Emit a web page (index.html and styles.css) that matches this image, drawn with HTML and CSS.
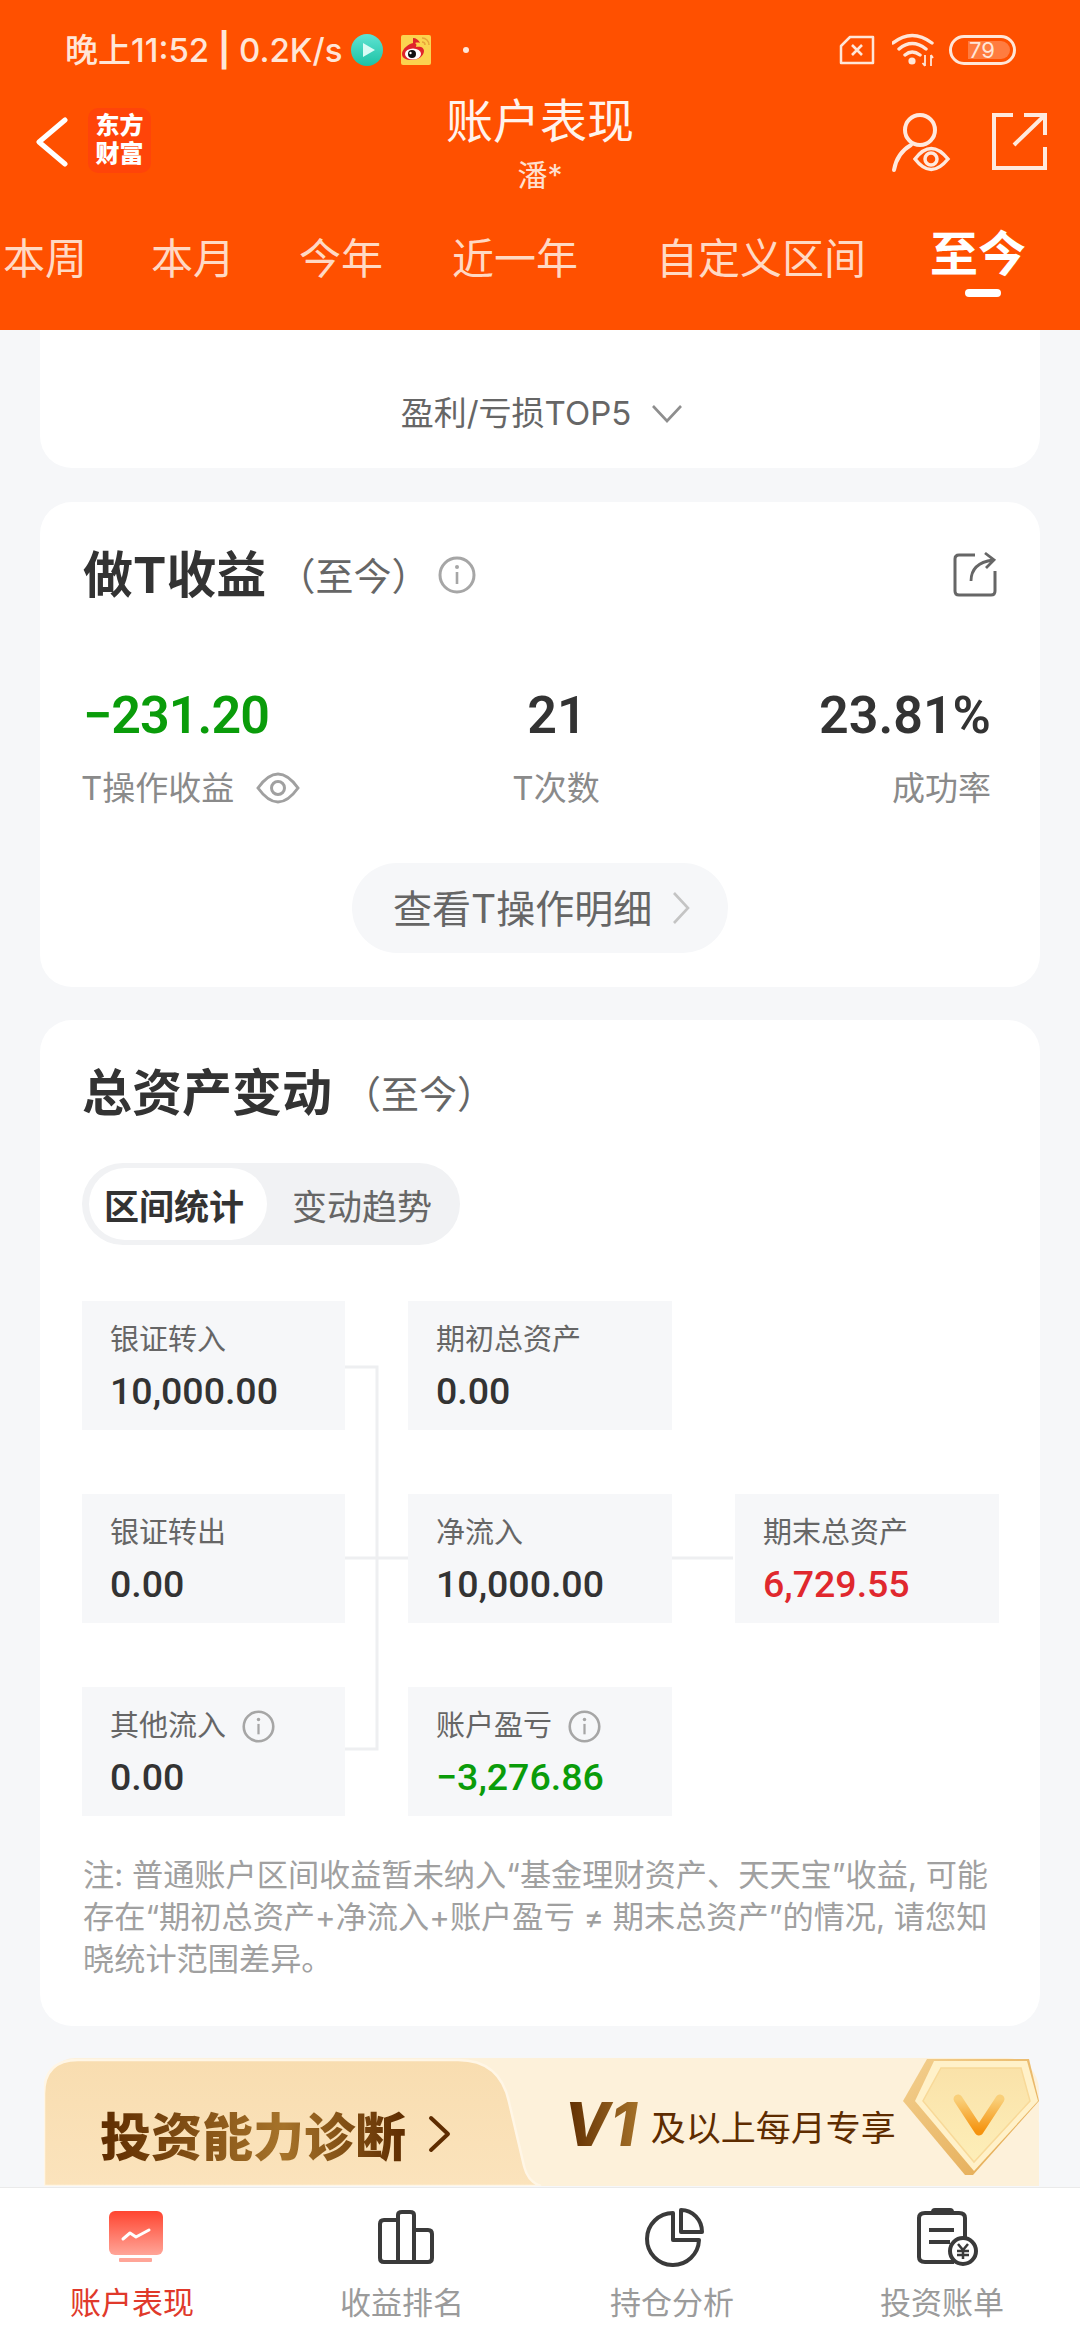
FILE: index.html
```html
<!DOCTYPE html>
<html lang="zh-CN">
<head>
<meta charset="utf-8">
<title>账户表现</title>
<link rel="stylesheet" href="styles.css">
</head>
<body>
<div class="app">
  <header class="header">
    <div class="status">
      <span class="status-text">晚上11:52 <b class="pipe">|</b> 0.2K/s</span>
      <svg class="st-play" viewBox="0 0 32 34"><defs><linearGradient id="pl" x1="0" y1="0" x2="0" y2="1"><stop offset="0" stop-color="#5fe3d3"/><stop offset="1" stop-color="#1cc2a4"/></linearGradient></defs><circle cx="16" cy="17" r="16" fill="url(#pl)"/><path d="M12 10 L24 17 L12 24Z" fill="#d8fbf5"/></svg>
      <svg class="st-weibo" viewBox="0 0 30 30"><rect width="30" height="30" rx="2" fill="#fbd34f"/><path d="M21 3a7 7 0 0 1 7 7M21 7a3 3 0 0 1 3 3" stroke="#e8a33a" stroke-width="1.5" fill="none"/><path d="M1 19c0-5 7-11 12-11 2 0 3 1 2 4 4-1 8 0 8 4 0 5-6 9-12 9S1 23 1 19z" fill="#e0242b"/><path d="M12 3c3 0 6 2 7 5-3-1-5 0-7 1z" fill="#e0242b"/><ellipse cx="12" cy="19" rx="8" ry="5.5" fill="#fff"/><circle cx="11" cy="19" r="4" fill="#111"/><circle cx="9.5" cy="18" r="1.2" fill="#fff"/></svg>
      <span class="st-dot"></span>
      <div class="status-right">
        <svg class="st-sim" viewBox="0 0 36 30"><path d="M11 2H34V28H2V11Z" fill="none" stroke="#ffe6d8" stroke-width="2.5" stroke-linejoin="round"/><path d="M13 10L23 20M23 10L13 20" stroke="#ffe6d8" stroke-width="2.6"/></svg>
        <svg class="st-wifi" viewBox="0 0 42 34"><path d="M1 10Q20-5 40 10M7 16Q20 5 34 16M13 22Q20 16 28 22" fill="none" stroke="#ffe6d8" stroke-width="3.4" stroke-linecap="round"/><circle cx="20" cy="28" r="3.6" fill="#ffe6d8"/><path d="M33 22V33M33 33l-2.500-3M39 33V22M39 22l2 3" stroke="#ffe6d8" stroke-width="1.800" fill="none"/></svg>
        <div class="st-batt"><span class="st-batt-fill">79</span></div>
      </div>
    </div>
    <div class="titlebar">
      <svg class="back" viewBox="0 0 32 50"><path d="M29 3L3 25L29 47" fill="none" stroke="#fff" stroke-width="5" stroke-linecap="round" stroke-linejoin="round"/></svg>
      <div class="logo">东方<br>财富</div>
      <div class="title-box">
        <div class="title">账户表现</div>
        <div class="subtitle">潘*</div>
      </div>
      <div class="title-actions">
        <svg class="act-person" viewBox="0 0 60 64"><circle cx="29" cy="20" r="15" fill="none" stroke="#ffe9dd" stroke-width="4"/><path d="M3 60Q6 43 20 35" fill="none" stroke="#ffe9dd" stroke-width="4" stroke-linecap="round"/><path d="M24 49Q40 28 57 49Q40 70 24 49Z" fill="none" stroke="#ffe9dd" stroke-width="3.500"/><circle cx="40" cy="49" r="6" fill="none" stroke="#ffe9dd" stroke-width="3.500"/></svg>
        <svg class="act-share" viewBox="0 0 58 60"><path d="M22 3H3V56H54V35" fill="none" stroke="#ffe9dd" stroke-width="4"/><path d="M23 33L53 4M33 3H54V23" fill="none" stroke="#ffe9dd" stroke-width="4"/></svg>
      </div>
    </div>
    <nav class="tabs">
      <span class="tab tab-a">本周</span>
      <span class="tab tab-b">本月</span>
      <span class="tab tab-c">今年</span>
      <span class="tab tab-d">近一年</span>
      <span class="tab tab-e">自定义区间</span>
      <span class="tab tab-on">至今</span>
    </nav>
  </header>

  <main class="main">
    <section class="card card-top">
      <span class="more">盈利/亏损TOP5</span>
      <svg class="more-chev" viewBox="0 0 32 20"><path d="M2 3L16 18L30 3" fill="none" stroke="#8e8e8e" stroke-width="2.600"/></svg>
    </section>

    <section class="card card-t">
      <div class="card-head">
        <h2 class="card-title">做T收益</h2>
        <span class="card-range">（至今）</span>
        <svg class="ic-info ic-info-lg" viewBox="0 0 38 38"><circle cx="19" cy="19" r="17" fill="none" stroke="#a6a6a6" stroke-width="3"/><circle cx="19" cy="11" r="2" fill="#a6a6a6"/><path d="M19 16V28" stroke="#a6a6a6" stroke-width="2.600"/></svg>
        <svg class="ic-share" viewBox="0 0 44 46"><path d="M22 4H6Q2 4 2 8V40Q2 44 6 44H38Q42 44 42 40V20" fill="none" stroke="#666" stroke-width="3"/><path d="M18 30Q18 12 40 9M32 2L41 9L33 17" fill="none" stroke="#666" stroke-width="2.800"/></svg>
      </div>
      <div class="stats">
        <div class="stat">
          <div class="stat-val green">−231.20</div>
          <div class="stat-lab">T操作收益<svg class="ic-eye" viewBox="0 0 44 32"><path d="M2 16Q22-12 42 16Q22 44 2 16Z" fill="none" stroke="#a0a0a0" stroke-width="3"/><circle cx="22" cy="16" r="6.500" fill="none" stroke="#a0a0a0" stroke-width="3"/></svg></div>
        </div>
        <div class="stat stat-mid">
          <div class="stat-val">21</div>
          <div class="stat-lab">T次数</div>
        </div>
        <div class="stat stat-end">
          <div class="stat-val">23.81%</div>
          <div class="stat-lab">成功率</div>
        </div>
      </div>
      <div class="btn-row">
        <div class="btn">查看T操作明细<svg class="btn-chev" viewBox="0 0 20 34"><path d="M3 2L17 17L3 32" fill="none" stroke="#c4c4c4" stroke-width="2.600"/></svg></div>
      </div>
    </section>

    <section class="card card-assets">
      <div class="card-head card-head-2">
        <h2 class="card-title">总资产变动</h2>
        <span class="card-range">（至今）</span>
      </div>
      <div class="seg">
        <span class="seg-item seg-on">区间统计</span>
        <span class="seg-item">变动趋势</span>
      </div>
      <div class="flow">
        <svg class="flow-lines" viewBox="0 0 915 515"><path d="M263 66H295V448H263M263 257H326M590 257H651" fill="none" stroke="#eeeff1" stroke-width="3"/></svg>
        <div class="box"><div class="box-lab">银证转入</div><div class="box-val">10,000.00</div></div>
        <div class="box"><div class="box-lab">期初总资产</div><div class="box-val">0.00</div></div>
        <div class="box box-empty"></div>
        <div class="box"><div class="box-lab">银证转出</div><div class="box-val">0.00</div></div>
        <div class="box"><div class="box-lab">净流入</div><div class="box-val">10,000.00</div></div>
        <div class="box"><div class="box-lab">期末总资产</div><div class="box-val box-red">6,729.55</div></div>
        <div class="box"><div class="box-lab">其他流入<svg class="ic-info ic-info-sm" viewBox="0 0 38 38"><circle cx="19" cy="19" r="17" fill="none" stroke="#a6a6a6" stroke-width="3"/><circle cx="19" cy="11" r="2" fill="#a6a6a6"/><path d="M19 16V28" stroke="#a6a6a6" stroke-width="2.600"/></svg></div><div class="box-val">0.00</div></div>
        <div class="box"><div class="box-lab">账户盈亏<svg class="ic-info ic-info-sm" viewBox="0 0 38 38"><circle cx="19" cy="19" r="17" fill="none" stroke="#a6a6a6" stroke-width="3"/><circle cx="19" cy="11" r="2" fill="#a6a6a6"/><path d="M19 16V28" stroke="#a6a6a6" stroke-width="2.600"/></svg></div><div class="box-val box-green">−3,276.86</div></div>
      </div>
      <p class="note">注: 普通账户区间收益暂未纳入“基金理财资产、天天宝”收益, 可能<br>存在“期初总资产+净流入+账户盈亏 ≠ 期末总资产”的情况, 请您知<br>晓统计范围差异。</p>
    </section>

    <section class="banner">
      <svg class="banner-tab" viewBox="0 0 500 128"><defs><linearGradient id="bt" x1="0" y1="0" x2="0" y2="1"><stop offset="0" stop-color="#f8ddb0"/><stop offset="1" stop-color="#fbe3bc"/></linearGradient></defs><path d="M0 128V36Q0 2 34 2H414Q456 2 465 44L480 108Q484 124 497 128Z" fill="url(#bt)" stroke="#fff6e6" stroke-width="2.500"/></svg>
      <div class="banner-left">
        <span class="banner-title">投资能力诊断</span>
        <svg class="banner-chev" viewBox="0 0 24 38"><path d="M3 3L20 19L3 35" fill="none" stroke="#5e2c00" stroke-width="4" stroke-linecap="round" stroke-linejoin="round"/></svg>
      </div>
      <div class="banner-right">
        <span class="banner-v">V1</span>
        <span class="banner-sub">及以上每月专享</span>
      </div>
      <svg class="badge" viewBox="0 0 136 116"><defs><linearGradient id="g1" x1="0" y1="0" x2="1" y2="1"><stop offset="0" stop-color="#f3cf8e"/><stop offset="1" stop-color="#e3a84f"/></linearGradient><linearGradient id="g2" x1="0" y1="0" x2="0" y2="1"><stop offset="0" stop-color="#fae2a9"/><stop offset="1" stop-color="#fdeeb8"/></linearGradient><linearGradient id="g3" x1="0" y1="0" x2="0" y2="1"><stop offset="0" stop-color="#f9cf79"/><stop offset="1" stop-color="#f5930f"/></linearGradient></defs><path d="M24 0H126L136 42L70 116H62L0 42Z" fill="url(#g1)"/><path d="M31 2H124L135 42L71 112L12 42Z" fill="#fff1c9"/><path d="M38 9H118L127 42L71 103L20 42Z" fill="url(#g2)" stroke="#f8d998" stroke-width="1.500"/><path d="M55 40L76 72L97 40" fill="none" stroke="url(#g3)" stroke-width="9" stroke-linecap="round" stroke-linejoin="round"/></svg>
    </section>
  </main>

  <footer class="nav">
    <div class="nav-item nav-on">
      <svg class="nav-ic" viewBox="0 0 64 60"><defs><linearGradient id="mon" x1="0" y1="0" x2="0" y2="1"><stop offset="0" stop-color="#ff4530"/><stop offset="1" stop-color="#ffa598"/></linearGradient></defs><rect x="9" y="3" width="54" height="44" rx="6" fill="url(#mon)"/><rect x="19" y="50" width="33" height="4" rx="1" fill="#ffa598"/><path d="M23 31L30 25L36 29L49 22" fill="none" stroke="#fff" stroke-width="3" stroke-linecap="round" stroke-linejoin="round"/></svg>
      <span class="nav-lab">账户表现</span>
    </div>
    <div class="nav-item">
      <svg class="nav-ic" viewBox="0 0 64 60"><path d="M28 12H14Q10 12 10 16V50Q10 54 14 54H28ZM28 7Q28 4 32 4H40Q44 4 44 7V54H28ZM44 22H58Q62 22 62 26V50Q62 54 58 54H44Z" fill="none" stroke="#3a3a3a" stroke-width="4" stroke-linejoin="round"/></svg>
      <span class="nav-lab">收益排名</span>
    </div>
    <div class="nav-item">
      <svg class="nav-ic" viewBox="0 0 64 60"><path d="M33 5V32H59A26 26 0 1 1 33 5Z" fill="none" stroke="#3a3a3a" stroke-width="4" stroke-linejoin="round"/><path d="M41 2A21 22 0 0 1 62 24H41Z" fill="none" stroke="#3a3a3a" stroke-width="4" stroke-linejoin="round"/></svg>
      <span class="nav-lab">持仓分析</span>
    </div>
    <div class="nav-item">
      <svg class="nav-ic" viewBox="0 0 64 60"><path d="M55 32V10Q55 5 49 5H15Q9 5 9 10V49Q9 54 15 54H44" fill="none" stroke="#3a3a3a" stroke-width="4"/><path d="M21 4Q21 0 25 0H40Q44 0 44 4" fill="#3a3a3a"/><path d="M19 22H44M19 34H40" stroke="#3a3a3a" stroke-width="4"/><circle cx="53" cy="43" r="13" fill="#fff" stroke="#3a3a3a" stroke-width="4"/><path d="M48 36L53 42L58 36M53 42V51M47 43H59M47 47H59" fill="none" stroke="#3a3a3a" stroke-width="2.500"/></svg>
      <span class="nav-lab">投资账单</span>
    </div>
  </footer>
</div>
</body>
</html>
```
FILE: styles.css
```css
* { box-sizing: border-box; }
html, body { margin: 0; padding: 0; }
body {
  width: 1080px;
  height: 2340px;
  overflow: hidden;
  background: #f6f7f9;
  font-family: Inter, "Noto Sans CJK SC", "Noto Sans", sans-serif;
  color: #333;
}
.app { display: flex; flex-direction: column; height: 2340px; overflow: hidden; }

/* header */
.header { height: 330px; background: #ff5000; flex: none; display: flex; flex-direction: column; }
.status { height: 100px; display: flex; align-items: center; padding-left: 65px; }
.status-text { font-size: 33px; font-weight: 500; color: #ffe6d8; white-space: nowrap; line-height: 40px; }
.pipe { font-weight: 700; }
.st-play { width: 32px; height: 34px; margin-left: 9px; }
.st-weibo { width: 30px; height: 30px; margin-left: 18px; }
.st-dot { width: 6px; height: 6px; border-radius: 50%; background: #ffe6d8; margin-left: 32px; }
.status-right { margin-left: auto; display: flex; align-items: center; padding-right: 64px; }
.st-sim { width: 36px; height: 30px; }
.st-wifi { width: 42px; height: 34px; margin-left: 17px; }
.st-batt { width: 67px; height: 30px; margin-left: 15px; border: 3px solid #ffe6d8; border-radius: 15px; padding: 3px; display: flex; }
.st-batt-fill { width: 44px; margin-left: 13px; background: rgba(255,255,255,.25); border-radius: 0 9px 9px 0; font-size: 22px; line-height: 18px; color: #ffe6d8; text-align: left; padding-left: 1px; }

.titlebar { height: 84px; position: relative; display: flex; align-items: center; }
.back { width: 32px; height: 50px; margin-left: 36px; flex: none; }
.logo { width: 63px; height: 65px; margin-left: 20px; background: #ff4409; border-radius: 10px; color: #fff; font-family: "Liberation Sans", "Noto Sans CJK SC", sans-serif; font-size: 24px; font-weight: 900; line-height: 28px; text-align: center; padding-top: 4px; margin-top: -4px; }
.title-box { position: absolute; left: 0; right: 0; top: 0; text-align: center; color: #fff; }
.title { font-size: 47px; line-height: 50px; margin-top: -7px; font-family: "Noto Sans CJK SC", sans-serif; color: #fff3ec; }
.subtitle { font-size: 30px; line-height: 36px; margin-top: 14px; color: #ffe0cf; }
.title-actions { margin-left: auto; display: flex; align-items: center; padding-right: 31px; position: relative; }
.act-person { width: 60px; height: 64px; }
.act-share { width: 58px; height: 60px; margin-left: 40px; }

.tabs { height: 146px; display: flex; align-items: flex-start; padding: 39px 0 0 3px; white-space: nowrap; }
.tab { font-size: 42px; line-height: 66px; color: #ffd9c4; font-family: "Noto Sans CJK SC", sans-serif; }
.tab-b, .tab-c { margin-left: 64px; }
.tab-d { margin-left: 69px; }
.tab-e { margin-left: 78px; }
.tab-on { margin-left: 64px; font-size: 48px; font-weight: 700; color: #fff; line-height: 54px; position: relative; height: 74px; }
.tab-on::after { content: ""; position: absolute; left: 35px; bottom: 0; width: 36px; height: 8px; border-radius: 4px; background: #fff; }

/* main */
.main { flex: 1; min-height: 0; overflow: hidden; display: flex; flex-direction: column; }
.card { background: #fff; margin: 0 40px; border-radius: 32px; flex: none; }
.card-top { height: 138px; border-radius: 0 0 32px 32px; display: flex; justify-content: center; align-items: center; gap: 20px; padding: 54px 0 26px 4px; }
.more { font-size: 33px; line-height: 40px; color: #666; }
.more-chev { width: 32px; height: 20px; }
.card-t { margin-top: 34px; height: 485px; padding: 48px 43px 0 43px; }
.card-head { display: flex; align-items: center; height: 50px; }
.card-title { margin: 0; font-size: 50px; line-height: 50px; font-weight: 700; color: #333; white-space: nowrap; }
.card-range { font-size: 38px; line-height: 50px; color: #666; margin: -3px 0 0 11px; white-space: nowrap; font-family: "Noto Sans CJK SC", sans-serif; }
.ic-info { flex: none; }
.ic-info-lg { width: 38px; height: 38px; margin-left: 9px; }
.ic-share { width: 44px; height: 46px; margin-left: auto; margin-top: -2px; }
.stats { display: grid; grid-template-columns: 414px 120px 1fr; margin-top: 90px; padding-right: 6px; }
.stat { display: flex; flex-direction: column; }
.stat-mid { align-items: center; }
.stat-end { align-items: flex-end; }
.stat-val { font-family: Roboto, sans-serif; font-size: 52px; line-height: 52px; font-weight: 600; color: #333; white-space: nowrap; }
.stat-lab { font-size: 33px; line-height: 44px; color: #8a8a8a; margin: 24px 0 0 -2px; display: flex; align-items: center; white-space: nowrap; }
.ic-eye { width: 44px; height: 32px; margin-left: 22px; }
.green { color: #0a9c0a; letter-spacing: -0.9px; }
.btn-row { display: flex; justify-content: center; margin-top: 53px; }
.btn { width: 376px; height: 90px; border-radius: 45px; background: #f6f7f9; display: flex; align-items: center; padding: 0 0 4px 41px; font-size: 39px; color: #666; white-space: nowrap; }
.btn-chev { width: 20px; height: 34px; margin: 4px 0 0 19px; }

.card-assets { margin-top: 33px; height: 1006px; padding: 48px 43px 0 42px; }
.seg { margin-top: 45px; width: 378px; height: 82px; border-radius: 41px; background: #f1f2f4; display: flex; align-items: center; padding-left: 7px; }
.seg-item { width: 178px; height: 72px; display: flex; align-items: center; justify-content: center; font-size: 35px; color: #666; white-space: nowrap; }
.seg-item + .seg-item { margin-left: 10px; width: 170px; }
.seg-on { background: #fff; border-radius: 36px; font-weight: 700; color: #333; padding-right: 8px; }
.flow { position: relative; margin-top: 56px; display: grid; grid-template-columns: 263px 264px 264px; grid-auto-rows: 129px; column-gap: 63px; row-gap: 64px; width: 916px; }
.flow-lines { position: absolute; left: 0; top: 0; width: 915px; height: 515px; }
.box { background: #f6f7f9; padding: 19px 0 0 28px; position: relative; }
.box-empty { background: transparent; }
.box-lab { font-size: 29px; line-height: 40px; color: #666; display: flex; align-items: center; white-space: nowrap; }
.ic-info-sm { width: 33px; height: 33px; margin-left: 16px; }
.box-val { font-family: Roboto, sans-serif; font-size: 37.500px; line-height: 48px; font-weight: 500; color: #333; margin-top: 7px; white-space: nowrap; }
.box-red { color: #e0282e; }
.box-green { color: #0a9c0a; }
.note { margin: 38px 0 0 1px; font-size: 31.2px; line-height: 42px; color: #a0a0a0; white-space: nowrap; }

/* banner */
.banner { position: relative; margin: 32px 41px 0 44px; height: 128px; flex: none; background: #fdf1da; border-radius: 32px 32px 0 0; display: flex; }
.banner-tab { position: absolute; left: 0; top: 0; width: 500px; height: 128px; }
.banner-left { position: relative; width: 524px; display: flex; align-items: center; padding-left: 56px; padding-top: 24px; }
.banner-title { font-size: 51px; line-height: 60px; font-weight: 900; white-space: nowrap; color: transparent; background: linear-gradient(90deg, #5e2c00 0%, #a6732a 60%, #5e2c00 100%); -webkit-background-clip: text; background-clip: text; font-family: "Noto Sans CJK SC", sans-serif; }
.banner-chev { width: 24px; height: 38px; margin-left: 22px; }
.banner-right { position: relative; display: flex; align-items: center; margin-left: -4px; margin-top: 4px; }
.banner-v { font-size: 60px; line-height: 70px; font-style: italic; font-weight: 800; color: transparent; background: linear-gradient(90deg, #5e2c00, #a6732a); -webkit-background-clip: text; background-clip: text; padding-right: 4px; }
.banner-sub { font-size: 35px; line-height: 44px; color: #5e2c00; margin-left: 10px; white-space: nowrap; padding-top: 8px; }
.badge { position: absolute; right: 0; top: 1px; width: 136px; height: 116px; }

/* nav */
.nav { height: 153px; width: 1084px; margin-left: -3px; flex: none; background: #fff; border-top: 1px solid #eaeaea; display: grid; grid-template-columns: repeat(4, 270px); position: relative; }
.nav-item { display: flex; flex-direction: column; align-items: center; padding-top: 20px; }
.nav-ic { width: 64px; height: 60px; overflow: visible; }
.nav-lab { font-size: 31px; line-height: 40px; color: #9b9b9b; margin-top: 15px; }
.nav-on .nav-lab { color: #e0392b; }
```
